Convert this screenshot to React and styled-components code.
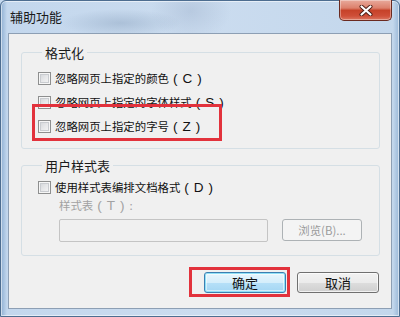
import React from "react";
import styled, { createGlobalStyle, css } from "styled-components";

const GlobalStyle = createGlobalStyle`
  html, body { margin: 0; padding: 0; }
  body {
    width: 400px;
    height: 317px;
    overflow: hidden;
    font-family: "Noto Sans CJK SC", "Noto Sans", sans-serif;
    background: #c6d9ee;
  }
  * { box-sizing: border-box; }
`;

const Window = styled.div`
  width: 400px;
  height: 317px;
  display: flex;
  flex-direction: column;
  border: 1px solid #4d6d90;
  border-radius: 6px 6px 0 0;
  background:
    radial-gradient(ellipse 60px 14px at 120px 22px, rgba(120, 145, 175, 0.35), transparent),
    radial-gradient(ellipse 40px 30px at 190px 10px, rgba(140, 160, 190, 0.3), transparent),
    linear-gradient(to right, #8fb0d3 0px, #c3d7ed 6px, #cbdcef 50%, #c3d7ec calc(100% - 6px), #9ab8d8 100%);
  box-shadow: inset 0 0 0 1px rgba(255, 255, 255, 0.55);
`;

const TitleBar = styled.div`
  height: 32px;
  flex: none;
  display: flex;
  align-items: flex-start;
  justify-content: space-between;
`;

const Title = styled.div`
  padding: 9px 0 0 9px;
  font-size: 13px;
  line-height: 14px;
  color: #1a1a1a;
`;

const CloseButton = styled.div`
  width: 53px;
  height: 21px;
  margin: -1px 7px 0 0;
  display: flex;
  align-items: center;
  justify-content: center;
  border: 1px solid #6a2a20;
  border-top: none;
  border-radius: 0 0 5px 5px;
  background: linear-gradient(
    to bottom,
    #e8aa9c 0%,
    #dc806c 40%,
    #c64229 52%,
    #cf4f38 80%,
    #dc7862 100%
  );
  box-shadow: inset 0 0 0 1px rgba(255, 255, 255, 0.35);
`;

const Client = styled.div`
  flex: 1;
  margin: 0 7px 7px 7px;
  border: 1px solid #8d9fb4;
  background: #f0f0f0;
  padding: 12px 11px 0 12px;
  display: flex;
  flex-direction: column;
`;

const Group = styled.fieldset`
  margin: ${(p) => (p.$spaced ? "10px" : "0")} 0 0 0;
  padding: ${(p) => (p.$spaced ? "7px 0 13px 16px" : "11px 0 14px 16px")};
  border: 1px solid #d5dfe5;
  border-radius: 3px;
  min-width: 0;
`;

const Legend = styled.legend`
  margin-left: 4px;
  padding: 0 3px;
  font-size: 13px;
  line-height: 13px;
  color: #1a1a1a;
`;

const CheckList = styled.div`
  display: flex;
  flex-direction: column;
  align-items: flex-start;
  gap: 8px;
`;

const CheckRow = styled.label`
  position: relative;
  display: inline-flex;
  align-items: center;
  gap: 4px;
  height: 16px;
  font-size: 11.4px;
  color: #111;
  white-space: nowrap;
  ${(p) =>
    p.$highlight &&
    css`
      &::after {
        content: "";
        position: absolute;
        left: -6px;
        top: -14px;
        right: -17px;
        bottom: -7px;
        border: 3px solid #e2323c;
        pointer-events: none;
      }
    `}
`;

const Box = styled.span`
  width: 13px;
  height: 13px;
  flex: none;
  border: 1px solid #8e8f8f;
  background: linear-gradient(135deg, #cfd2d6 0%, #e6e7e9 50%, #f8f8f8 100%);
  box-shadow: inset 0 0 0 1px #f6f6f6, inset 0 0 0 2px #c9ccd0;
`;

const Key = styled.span`
  margin-left: 4px;
  font-family: "Liberation Sans", "Noto Sans", sans-serif;
  font-size: 13.5px;
  letter-spacing: 5px;
`;

const FieldLabel = styled.div`
  margin: 3px 0 0 21px;
  height: 14px;
  line-height: 14px;
  font-size: 11.4px;
  color: #a2a2a2;
`;

const FieldRow = styled.div`
  margin: 7px 0 0 21px;
  display: flex;
  align-items: flex-start;
  gap: 14px;
`;

const TextBox = styled.div`
  width: 209px;
  height: 23px;
  border: 1px solid #c4c4c4;
  border-radius: 2px;
  background: #f0f0f0;
`;

const SmallButton = styled.div`
  width: 80px;
  height: 22px;
  display: flex;
  align-items: center;
  justify-content: center;
  border: 1px solid #adb2b5;
  border-radius: 3px;
  background: #f4f4f4;
  font-size: 11.4px;
  color: #9a9a9a;
`;

const ButtonBar = styled.div`
  margin-top: 16px;
  padding-right: 1px;
  display: flex;
  justify-content: flex-end;
  gap: 11px;
`;

const DialogButton = styled.div`
  position: relative;
  width: 82px;
  height: 21px;
  display: flex;
  align-items: center;
  justify-content: center;
  border-radius: 3px;
  font-size: 13px;
  color: #111;
  ${(p) =>
    p.$default
      ? css`
          border: 1px solid #3c7fb1;
          background: linear-gradient(
            to bottom,
            #e8f6fd 0%,
            #d5eefb 50%,
            #b6e0f8 51%,
            #a4d6f3 100%
          );
          box-shadow: inset 0 0 0 1px #8fe0f7, inset 0 0 0 2px rgba(255, 255, 255, 0.5);
        `
      : css`
          border: 1px solid #707070;
          background: linear-gradient(
            to bottom,
            #f2f2f2 0%,
            #ebebeb 50%,
            #dddddd 51%,
            #cfcfcf 100%
          );
          box-shadow: inset 0 0 0 1px rgba(255, 255, 255, 0.7);
        `}
  ${(p) =>
    p.$highlight &&
    css`
      &::after {
        content: "";
        position: absolute;
        left: -16px;
        top: -6px;
        right: -5px;
        bottom: -5px;
        border: 3px solid #e2323c;
        pointer-events: none;
      }
    `}
`;

const CloseGlyph = () => (
  <svg width="14" height="11" viewBox="0 0 14 11">
    <path d="M2.5 1.5 L11.5 9.5 M11.5 1.5 L2.5 9.5" stroke="#4a1c14" strokeWidth="4" strokeLinecap="round" />
    <path d="M2.5 1.5 L11.5 9.5 M11.5 1.5 L2.5 9.5" stroke="#ffffff" strokeWidth="2.2" strokeLinecap="round" />
  </svg>
);

const formatOptions = [
  { text: "忽略网页上指定的颜色", key: "(C)" },
  { text: "忽略网页上指定的字体样式", key: "(S)" },
  { text: "忽略网页上指定的字号", key: "(Z)", highlight: true },
];

export default function App() {
  return (
    <>
      <GlobalStyle />
      <Window>
        <TitleBar>
          <Title>辅助功能</Title>
          <CloseButton>
            <CloseGlyph />
          </CloseButton>
        </TitleBar>
        <Client>
          <Group>
            <Legend>格式化</Legend>
            <CheckList>
              {formatOptions.map((o) => (
                <CheckRow key={o.key} $highlight={o.highlight}>
                  <Box />
                  <span>
                    {o.text}
                    <Key>{o.key}</Key>
                  </span>
                </CheckRow>
              ))}
            </CheckList>
          </Group>
          <Group $spaced>
            <Legend>用户样式表</Legend>
            <CheckList>
              <CheckRow>
                <Box />
                <span>
                  使用样式表编排文档格式
                  <Key>(D)</Key>
                </span>
              </CheckRow>
            </CheckList>
            <FieldLabel>
              样式表<Key>(T)</Key>:
            </FieldLabel>
            <FieldRow>
              <TextBox />
              <SmallButton>浏览(B)...</SmallButton>
            </FieldRow>
          </Group>
          <ButtonBar>
            <DialogButton $default $highlight>
              确定
            </DialogButton>
            <DialogButton>取消</DialogButton>
          </ButtonBar>
        </Client>
      </Window>
    </>
  );
}
